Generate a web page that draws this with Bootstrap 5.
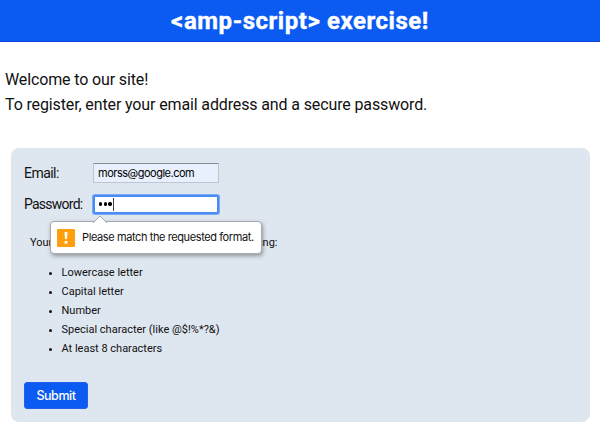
<!DOCTYPE html>
<html lang="en">
<head>
<meta charset="utf-8">
<meta name="viewport" content="width=device-width, initial-scale=1">
<title>amp-script exercise</title>
<link href="https://cdn.jsdelivr.net/npm/bootstrap@5.3.0/dist/css/bootstrap.min.css" rel="stylesheet">
<style>
body{font-family:Roboto,sans-serif;color:#111;background:#fff;line-height:1.2;overflow:hidden}
.site-head{background:#0b5bf2;height:42px;border-bottom:1px solid #1243de}
.site-head h1{font-size:24px;font-weight:700;line-height:42px;letter-spacing:.54px;-webkit-text-stroke:.4px #fff}
.intro{font-size:16px;line-height:25px;padding:25px 5px 0;letter-spacing:-.13px}
.panel{background:#dee6ef;border-radius:8px;margin:31px 10px 0 11px;height:274px;padding:15px 13px 0}
.field-row{height:20px;font-size:14px}
.field-row label{width:69px;letter-spacing:-.75px}
.field-row label[for=email]{letter-spacing:-.55px}
.field-row + .field-row{margin-top:11px}
.field{width:126px;height:20px;font-family:Inter,sans-serif;font-size:11px;letter-spacing:-.49px;padding:0 4px;border:1px solid #bfc5d3;border-top-color:#858b98;border-radius:0;background:#e8f0fe;color:#000}
.field-active{background:#fff;border:2px solid #4a8df5;border-radius:2px;box-shadow:0 0 0 1px #79aaf6;height:19px}
.dot{width:3.4px;height:3.4px;border-radius:50%;background:#000;margin-right:1.2px}
.caret{width:1px;height:13px;background:#444}
.rules{font-size:11px;line-height:19px;padding-top:19px}
.rules p{padding-left:6px;margin:0 0 11px}
.rules ul{padding-left:37.5px}
.tip{left:26px;top:7px;width:212px;height:33px;background:#fff;border:1px solid #a6a9af;border-radius:4px;box-shadow:1px 2px 4px rgba(0,0,0,.35);font-family:Inter,sans-serif;font-size:11px;letter-spacing:-.4px;white-space:nowrap;padding-left:6px}
.tip-text{margin-left:7px}
.tip-arrow{left:41px;top:-7px}
.btn-send{width:64px;height:27px;background:#0b5bf2;border:1px solid #2460ee;border-radius:3px;color:#fff;font-family:Inter,sans-serif;font-size:12.5px;line-height:26px;letter-spacing:-.45px;font-weight:500;margin-top:24px}
</style>
</head>
<body>
<header class="site-head text-center text-white"><h1 class="m-0">&lt;amp-script&gt; exercise!</h1></header>
<main>
<div class="intro"><p class="m-0">Welcome to our site!</p><p class="m-0">To register, enter your email address and a secure password.</p></div>
<form class="panel">
  <div class="field-row d-flex align-items-center"><label for="email">Email:</label><input id="email" class="form-control field" value="morss@google.com"></div>
  <div class="field-row d-flex align-items-center"><label>Password:</label>
    <div class="field field-active d-flex align-items-center"><i class="dot"></i><i class="dot"></i><i class="dot"></i><i class="caret"></i></div>
  </div>
  <div class="rules position-relative">
    <p>Your password must contain each of the following:</p>
    <ul class="m-0"><li>Lowercase letter</li><li>Capital letter</li><li>Number</li><li>Special character (like @$!%*?&amp;)</li><li>At least 8 characters</li></ul>
    <div class="tip position-absolute d-flex align-items-center" role="tooltip">
      <svg class="tip-arrow position-absolute" width="16" height="8" viewBox="0 0 16 8"><path d="M1 8 8 1l7 7" fill="#fff" stroke="#a6a9af"/></svg>
      <svg class="flex-shrink-0" width="18" height="18" viewBox="0 0 18 18"><rect width="18" height="18" rx="1" fill="#ff9f0d"/><path d="M7.5 3h3l-.5 7H8zM7.6 12h2.8v2.8H7.6z" fill="#fff"/></svg>
      <span class="tip-text">Please match the requested format.</span>
    </div>
  </div>
  <button type="button" class="btn btn-send p-0 d-block">Submit</button>
</form>
</main>
</body>
</html>
